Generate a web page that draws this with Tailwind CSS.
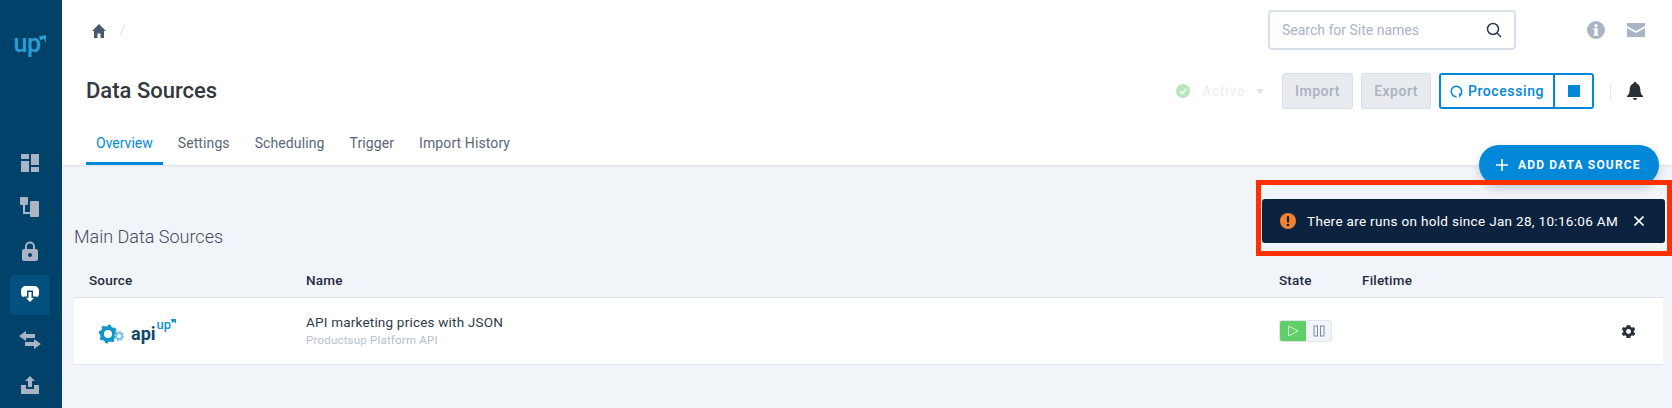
<!DOCTYPE html>
<html>
<head>
<meta charset="utf-8">
<script src="https://cdn.jsdelivr.net/npm/@tailwindcss/browser@4"></script>
</head>
<body class="font-['Roboto',sans-serif]">
<div class="relative flex w-[1672px] h-[408px] overflow-hidden bg-[#f1f4f8]">
  <aside class="w-[62px] h-full shrink-0 bg-[#00426a] flex flex-col items-center pr-[2px]">
    <div class="h-[141px] pt-[29px] w-full flex justify-center items-start text-[#2a9fd6]">
      <span class="text-[25px] font-medium leading-[30px] tracking-[-0.5px]">up</span>
      <svg width="7" height="8" viewBox="0 0 7 8" fill="#2a9fd6" class="mt-[6px] -ml-[1px]"><path d="M0 1.500 7 0V8L5 3.500 1 5.500Z"/></svg>
    </div>
    <div class="w-[40px] h-[44px] flex items-center justify-center">
      <svg width="18" height="18" viewBox="0 0 18 18" fill="#a9b5c4"><rect x="0" y="0" width="8" height="5"/><rect x="0" y="7" width="8" height="11"/><rect x="10" y="0" width="8" height="11"/><rect x="10" y="13" width="8" height="5"/></svg>
    </div>
    <div class="w-[40px] h-[44px] flex items-center justify-center">
      <svg width="20" height="20" viewBox="0 0 20 20" fill="#a9b5c4"><rect x="0" y="0" width="8" height="8" rx="1"/><rect x="10" y="4" width="9" height="16" rx="1"/><path d="M3 8h2v7h5v2H3z"/></svg>
    </div>
    <div class="w-[40px] h-[44px] flex items-center justify-center">
      <svg width="16" height="20" viewBox="0 0 16 20"><path d="M4 9V5.500a4 4 0 0 1 8 0V9" fill="none" stroke="#a9b5c4" stroke-width="2"/><rect x="0" y="8" width="16" height="12" rx="2" fill="#a9b5c4"/><circle cx="8" cy="14" r="2" fill="#00426a"/></svg>
    </div>
    <div class="w-[40px] h-[40px] my-[2px] rounded-[3px] bg-[#034f7d] flex items-center justify-center">
      <svg width="18" height="18" viewBox="0 0 18 18"><path d="M4 11.500C1.500 11.500 0 10 0 7.500V5C0 2 2 0 5 0h8c3 0 5 2 5 5v2.500C18 10 16.500 11.500 14 11.500Z" fill="#fff"/><path d="M6 4.500h6v6h4L9 18 2 10.500H6Z" fill="#034f7d"/><path d="M7.500 6h3v6h2.500L9 16 5 12H7.500Z" fill="#fff"/></svg>
    </div>
    <div class="w-[40px] h-[46px] flex items-center justify-center">
      <svg width="22" height="18" viewBox="0 0 22 18" fill="#a9b5c4"><path d="M0 5 7 0v3h9v4H7v3z"/><path d="M22 13l-7-5v3H6v4h9v3z"/></svg>
    </div>
    <div class="w-[40px] h-[44px] flex items-center justify-center">
      <svg width="18" height="18" viewBox="0 0 18 18" fill="#a9b5c4"><path d="M9 0l5 5h-3v6H7V5H4z"/><path d="M0 9h5v4h8V9h5v9H0z"/></svg>
    </div>
  </aside>

  <main class="flex-1 min-w-0 flex flex-col">
    <header class="h-[165px] bg-white pl-[24px] pr-[26px] shadow-[0_1px_2px_rgba(30,50,80,0.1)] flex flex-col">
      <div class="h-[60px] mb-[5px] flex items-center">
        <svg width="14" height="14" viewBox="0 0 14 14" fill="#4a5a6e" class="ml-[6px] mt-[1px]"><path d="M7 0 14 7H12V14H8.500V9.500H5.500V14H2V7H0Z"/></svg>
        <span class="ml-[14px] text-[12px] text-[#d5dde6]">/</span>
        <div class="ml-auto w-[248px] h-[40px] mr-[71px] rounded-[4px] border-2 border-[#d8e0e9] flex items-center pl-[12px] pr-[12px]">
          <span class="flex-1 text-[14px] text-[#a9b5c4]">Search for Site names</span>
          <svg width="16" height="16" viewBox="0 0 16 16" fill="none" stroke="#2b3a4f" stroke-width="1.500"><circle cx="7" cy="7" r="5.500"/><path d="M11 11l4 4"/></svg>
        </div>
        <svg width="18" height="18" viewBox="0 0 18 18" class="mr-[22px]"><circle cx="9" cy="9" r="9" fill="#a9b5c4"/><rect x="7.500" y="7.500" width="3.200" height="7" fill="#fff"/><rect x="6.500" y="7.500" width="4" height="1.500" fill="#fff"/><rect x="6.500" y="13" width="5" height="1.500" fill="#fff"/><circle cx="9" cy="4.800" r="1.700" fill="#fff"/></svg>
        <svg width="18" height="14" viewBox="0 0 18 14" fill="#a9b5c4" class="mr-[1px]"><path d="M0 0h18v3L9 8 0 3z"/><path d="M0 5l9 5 9-5v9H0z"/></svg>
      </div>
      <div class="h-[52px] flex items-center">
        <h1 class="text-[22px] font-medium text-[#33383f] leading-none mt-[-1px]">Data Sources</h1>
        <div class="ml-auto flex items-center">
          <svg width="14" height="14" viewBox="0 0 14 14" class="mr-[12px]"><circle cx="7" cy="7" r="7" fill="#b5e6bc"/><path d="M3.800 7.200 6 9.400 10.200 5" fill="none" stroke="#fff" stroke-width="1.600"/></svg>
          <span class="text-[14px] font-medium text-[#eef1f4] tracking-[0.6px] w-[54px]">Active</span>
          <svg width="8" height="5" viewBox="0 0 8 5" fill="#e0e5eb" class="mr-[18px]"><path d="M0 0h8L4 5z"/></svg>
          <button class="w-[71px] h-[36px] rounded-[3px] border border-[#d8e0e9] bg-[#e7ebf0] text-[14px] font-medium text-[#a9b2bf] tracking-[0.5px]">Import</button>
          <button class="ml-[8px] w-[70px] h-[36px] rounded-[3px] border border-[#d8e0e9] bg-[#e7ebf0] text-[14px] font-medium text-[#a9b2bf] tracking-[0.5px]">Export</button>
          <div class="ml-[8px] w-[155px] h-[36px] rounded-[3px] border-2 border-[#0288d8] flex items-stretch">
            <div class="flex-1 flex items-center justify-center gap-[5px] border-r-2 border-[#0288d8]">
              <svg width="13" height="13" viewBox="0 0 13 13" fill="none" stroke="#0288d8" stroke-width="1.500"><path d="M6.500 11.700A5.200 5.200 0 1 1 11.200 8.500"/><path d="M12.800 8.500 9.200 12.800 8.800 8.300Z" fill="#0288d8" stroke="none"/></svg>
              <span class="text-[14px] font-medium text-[#0288d8] tracking-[0.6px]">Processing</span>
            </div>
            <div class="w-[37px] flex items-center justify-center"><span class="w-[12px] h-[12px] bg-[#0288d8]"></span></div>
          </div>
          <span class="ml-[16px] w-px h-[16px] bg-[#e3e8ee]"></span>
          <svg width="16" height="18" viewBox="0 0 16 18" fill="#2b2f36" class="ml-[16px] mr-[3px]"><path d="M8 0c1 0 1.500.7 1.500 1.500C12 2.300 13.300 4.500 13.300 7.500c0 3.500 1 4.700 2.700 6.500v1H0v-1c1.700-1.800 2.700-3 2.700-6.500 0-3 1.300-5.200 3.800-6C6.500.7 7 0 8 0z"/><path d="M6 16h4a2 2 0 0 1-4 0z"/></svg>
        </div>
      </div>
      <nav class="mt-auto flex h-[43px] text-[14px] leading-[20px] text-[#5a6779]">
        <a class="px-[10px] pt-[11px] border-b-[3px] border-[#0288d8] text-[#0288d8]">Overview</a>
        <a class="ml-[5px] px-[10px] pt-[11px] tracking-[0.1px]">Settings</a>
        <a class="ml-[5px] px-[10px] pt-[11px] tracking-[0.1px]">Scheduling</a>
        <a class="ml-[5px] px-[10px] pt-[11px] tracking-[0.1px]">Trigger</a>
        <a class="ml-[5px] px-[10px] pt-[11px] tracking-[0.1px]">Import History</a>
      </nav>
    </header>

    <section class="pl-[12px] pr-[9px] flex-1 flex flex-col">
      <h2 class="mt-[61px] h-[22px] text-[18px] font-light leading-[22px] text-[#3f4c5e]">Main Data Sources</h2>
      <div class="mt-[15px] h-[35px] grid grid-cols-[217px_973px_83px_1fr] pl-[15px] text-[13.500px] font-medium text-[#1f2d42] tracking-[0.2px] border-b border-[#dfe5ec] items-center">
        <span>Source</span><span>Name</span><span>State</span><span>Filetime</span>
      </div>
      <div class="h-[67px] bg-white border-b border-[#dfe5ec] grid grid-cols-[217px_973px_1fr] pl-[15px] items-center">
        <div class="flex items-center pl-[10px]">
          <svg width="25" height="20" viewBox="0 0 25 20" class="mt-[6px] shrink-0"><circle cx="9" cy="10" r="6" fill="none" stroke="#0f97c9" stroke-width="4"/><circle cx="9" cy="10" r="8.200" fill="none" stroke="#0f97c9" stroke-width="2.400" stroke-dasharray="3 3.400"/><circle cx="20" cy="12" r="3" fill="none" stroke="#7cc3e6" stroke-width="2"/><circle cx="20" cy="12" r="4.500" fill="none" stroke="#7cc3e6" stroke-width="1.300" stroke-dasharray="1.800 1.700"/></svg>
          <span class="ml-[7px] text-[18px] font-bold text-[#0e4a68] mt-[6px] leading-none">api</span>
          <span class="ml-[1px] mb-[13px] text-[13px] font-medium text-[#0f97c9] leading-none">up</span>
          <svg width="5" height="5" viewBox="0 0 5 5" fill="#0f97c9" class="mb-[20px]"><path d="M0 0h5v5L3.500 2.500 1 4z"/></svg>
        </div>
        <div class="mt-[-1px]">
          <div class="text-[13.500px] leading-[17px] text-[#2f3a4a] tracking-[0.2px]">API marketing prices with JSON</div>
          <div class="mt-[1px] text-[11.500px] leading-[16px] text-[#b4bfcd] tracking-[0.2px]">Productsup Platform API</div>
        </div>
        <div class="flex items-center">
          <div class="w-[53px] h-[22px] flex rounded-[3px] overflow-hidden border border-[#dfe5ec] bg-[#f1f4f8]">
            <div class="w-[26px] h-full bg-[#5fcf6a] flex items-center justify-center">
              <svg width="12" height="12" viewBox="0 0 12 12" fill="none" stroke="#d9f5dc" stroke-width="1"><path d="M1.500 1 11 6 1.500 11Z"/></svg>
            </div>
            <div class="flex-1 flex items-center justify-center">
              <svg width="12" height="12" viewBox="0 0 12 12" fill="none" stroke="#7c8a9c" stroke-width="1"><rect x="1" y="1" width="3.500" height="10"/><rect x="7.500" y="1" width="3.500" height="10"/></svg>
            </div>
          </div>
          <svg width="17" height="17" viewBox="0 0 24 24" fill="#2b2f36" class="ml-auto mr-[26px]"><path fill-rule="evenodd" d="M19.400 13a7.500 7.500 0 0 0 0-2l2.200-1.700-2.200-3.700-2.500 1a8 8 0 0 0-1.800-1L14.700 3H9.300l-.4 2.600a8 8 0 0 0-1.800 1l-2.500-1-2.200 3.700L4.600 11a7.500 7.500 0 0 0 0 2l-2.200 1.700 2.200 3.700 2.500-1a8 8 0 0 0 1.800 1l.4 2.600h5.400l.4-2.600a8 8 0 0 0 1.800-1l2.500 1 2.200-3.700ZM12 15.500a3.500 3.500 0 1 1 0-7 3.500 3.500 0 0 1 0 7Z"/></svg>
        </div>
      </div>
    </section>
  </main>

  <button class="absolute left-[1479px] top-[145px] w-[180px] h-[40px] rounded-full bg-[#0288d8] shadow-[0_3px_8px_rgba(20,60,100,0.22)] flex items-center pl-[17px] text-white">
    <svg width="12" height="12" viewBox="0 0 12 12" stroke="#fff" stroke-width="1.600"><path d="M6 0v12M0 6h12"/></svg>
    <span class="ml-[10px] text-[12px] font-bold tracking-[1.150px]">ADD DATA SOURCE</span>
  </button>

  <div class="absolute left-[1256px] top-[180px] w-[416px] h-[76px] border-[5px] border-[#ff3000]"></div>

  <div class="absolute left-[1262px] top-[199px] w-[403px] h-[44px] rounded-[3px] bg-[#0c2340] flex items-center pl-[18px] text-white">
    <svg width="16" height="16" viewBox="0 0 16 16"><circle cx="8" cy="8" r="8" fill="#f28130"/><rect x="6.900" y="3" width="2.200" height="6.500" rx="1" fill="#0c2340"/><circle cx="8" cy="12" r="1.300" fill="#0c2340"/></svg>
    <span class="ml-[11px] text-[13.500px] font-normal tracking-[0.32px]">There are runs on hold since Jan 28, 10:16:06 AM</span>
    <svg width="10" height="10" viewBox="0 0 10 10" stroke="#fff" stroke-width="1.600" class="ml-auto mr-[21px]"><path d="M0.500 0.500l9 9M9.500 0.500l-9 9"/></svg>
  </div>
</div>
</body>
</html>
